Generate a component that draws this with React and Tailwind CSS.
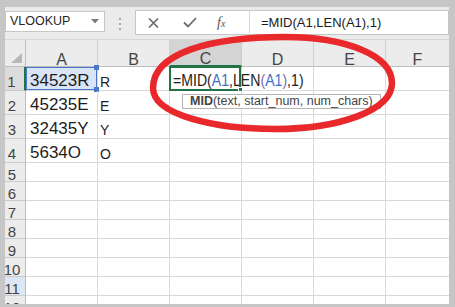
import React from 'react';

const rows = [
  { n: '1', a: '34523R', b: 'R', tall: true },
  { n: '2', a: '45235E', b: 'E', tall: true },
  { n: '3', a: '32435Y', b: 'Y', tall: true },
  { n: '4', a: '5634O', b: 'O', tall: true },
  { n: '5' }, { n: '6' }, { n: '7' }, { n: '8' }, { n: '9' }, { n: '10' }, { n: '11' }, { n: '12' },
];

function RowHeader({ n, tall }) {
  const selected = n === '1';
  const blue = n === '11';
  return (
    <div
      className={`flex w-[21px] shrink-0 items-end justify-center border-b border-[#c9c9c9] pr-[6px] text-[15px] text-[#444] ${
        tall ? 'leading-[17px]' : 'leading-[13px]'
      } ${selected ? 'border-r-2 border-r-[#217346] bg-[#dcdcdc]' : 'border-r border-r-[#bdbdbd]'} ${
        blue ? 'bg-[#dde7f3]' : selected ? '' : 'bg-[#ececec]'
      }`}
    >
      {n}
    </div>
  );
}

function Cell({ children, className = '' }) {
  return (
    <div className={`w-[72px] shrink-0 border-b border-r border-[#d8d8d8] ${className}`}>{children}</div>
  );
}

export default function App() {
  return (
    <div className="relative h-[307px] w-[455px] overflow-hidden bg-[#c6c6c6] pb-[3px] pl-[5px] pr-[6px] pt-[7px] font-['Liberation_Sans',Arial,sans-serif]">
      <div className="flex h-full flex-col overflow-hidden bg-white">
        {/* formula bar */}
        <div className="flex h-[33px] shrink-0 items-start border-b border-[#d6d6d6] bg-[#ebebeb] pt-[3px]">
          <div className="mt-[1px] flex h-[21px] w-[100px] shrink-0 items-center justify-between border border-[#c6c6c6] bg-white pl-[4px] pr-[5px] text-[12.5px] leading-none text-[#262626]">
            <span>VLOOKUP</span>
            <svg width="8" height="5" viewBox="0 0 8 5">
              <path d="M0 0h8L4 4.5z" fill="#7a7a7a" />
            </svg>
          </div>
          <div className="flex w-[30px] shrink-0 flex-col items-center gap-[3px] pt-[8px]">
            <span className="h-[2px] w-[2px] bg-[#a8a8a8]" />
            <span className="h-[2px] w-[2px] bg-[#a8a8a8]" />
            <span className="h-[2px] w-[2px] bg-[#a8a8a8]" />
          </div>
          <div className="flex h-[25px] flex-1 border border-[#c6c6c6] bg-white">
            <div className="flex w-[113px] shrink-0 items-center">
              <svg className="ml-[12px]" width="11" height="10" viewBox="0 0 11 10">
                <path d="M1 0.5L10 9.5M10 0.5L1 9.5" stroke="#6b6b6b" strokeWidth="1.6" />
              </svg>
              <svg className="ml-[24px]" width="14" height="11" viewBox="0 0 14 11">
                <path d="M1 5.5L5 9.5L13 1" stroke="#6b6b6b" strokeWidth="1.8" fill="none" />
              </svg>
              <span className="ml-[20px] font-['Liberation_Serif',serif] text-[14px] italic leading-none text-[#555]">
                f<span className="text-[10px]">x</span>
              </span>
            </div>
            <div className="flex flex-1 items-center border-l border-[#d9d9d9] pl-[11px] text-[13px] text-[#1a1a1a]">
              =MID(A1,LEN(A1),1)
            </div>
          </div>
        </div>

        {/* column headers */}
        <div className="flex h-[27px] shrink-0">
          <div className="relative w-[21px] shrink-0 border-b border-r border-[#bdbdbd] bg-[#ececec]">
            <svg className="absolute bottom-[3px] right-[3px]" width="11" height="10" viewBox="0 0 11 10">
              <path d="M11 0V10H0z" fill="#b7b7b7" />
            </svg>
          </div>
          {['A', 'B', 'C', 'D', 'E'].map((c) => (
            <div
              key={c}
              className={`flex w-[72px] shrink-0 items-end justify-center border-r border-[#cfcfcf] text-[16px] text-[#444] ${
                c === 'C'
                  ? 'border-b-2 border-b-[#217346] bg-[#d4d4d4] leading-[12px]'
                  : 'border-b border-b-[#bdbdbd] bg-[#ececec] leading-[13px]'
              }`}
            >
              {c}
            </div>
          ))}
          <div className="flex flex-1 items-end justify-center border-b border-[#bdbdbd] bg-[#ececec] text-[16px] leading-[13px] text-[#444]">
            F
          </div>
        </div>

        {/* rows */}
        {rows.map((r) => (
          <div key={r.n} className={`flex shrink-0 ${r.tall ? 'h-[24px]' : 'h-[19px]'}`}>
            <RowHeader n={r.n} tall={r.tall} />
            <Cell
              className={`relative flex items-end whitespace-nowrap pl-[4px] text-[17px] leading-[18px] text-[#1e1e1e] ${
                r.n === '1' ? 'bg-[#d9e5f4]' : ''
              }`}
            >
              {r.a}
              {r.n === '1' && (
                <span className="pointer-events-none absolute inset-[0px] border border-[#4a78c8]">
                  <span className="absolute -right-[3px] -top-[3px] h-[5px] w-[5px] bg-[#4a78c8]" />
                  <span className="absolute -bottom-[3px] -right-[3px] h-[5px] w-[5px] bg-[#4a78c8]" />
                </span>
              )}
            </Cell>
            <Cell className="flex items-end pl-[2px] text-[14px] leading-[16px] text-[#1e1e1e]">{r.b}</Cell>
            <Cell className="relative">
              {r.n === '1' && (
                <>
                  <div className="absolute left-[3px] top-0 z-10 flex h-full origin-left scale-x-[0.83] items-end whitespace-nowrap text-[17px] leading-[18px] text-[#1e1e1e]">
                    =MID(<span className="text-[#3f6fc6]">A1</span>,LEN<span className="text-[#7d6bb0]">(</span>
                    <span className="text-[#3f6fc6]">A1</span>
                    <span className="text-[#7d6bb0]">)</span>,1)
                  </div>
                  <span className="pointer-events-none absolute -left-[1px] -top-[1px] bottom-[-1px] right-0 z-20 border-2 border-[#217346]">
                    <span className="absolute -bottom-[3px] -right-[4px] h-[5px] w-[5px] border border-white bg-[#217346]" />
                  </span>
                </>
              )}
            </Cell>
            <Cell />
            <Cell />
            <div className="flex-1 border-b border-[#d8d8d8]" />
          </div>
        ))}
      </div>

      {/* function tooltip */}
      <div className="absolute left-[182px] top-[94px] z-30 flex h-[15px] items-center whitespace-nowrap border border-[#b5b5b5] bg-white px-[7px] text-[12.5px] leading-none text-[#444]">
        <span className="font-bold">MID</span>(text, start_num, num_chars)
      </div>

      {/* red annotation ellipse */}
      <svg className="pointer-events-none absolute left-0 top-0 z-40" width="455" height="307" viewBox="0 0 455 307">
        <path
          d="M153 88 C153 115 215 129 275 129 C340 129 392 110 392 83 C392 55 345 37 285 37 C210 37 153 53 153 88 Z"
          fill="none"
          stroke="#e8282b"
          strokeWidth="6.5"
        />
      </svg>
    </div>
  );
}
